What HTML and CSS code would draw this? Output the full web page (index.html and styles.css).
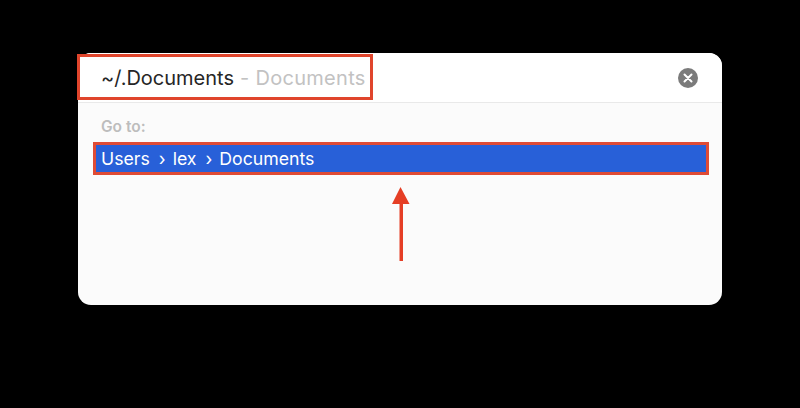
FILE: index.html
```html
<!DOCTYPE html>
<html lang="en">
<head>
  <meta charset="UTF-8">
  <title>Go to Folder</title>
  <link rel="stylesheet" href="styles.css">
</head>
<body>
  <div class="dialog">
    <div class="header">
      <div class="path-box">
        <span class="path">~/.Documents</span>
        <span class="hint">- Documents</span>
      </div>
      <svg class="close" viewBox="0 0 20 20" width="20" height="20">
        <circle cx="10" cy="10" r="10" fill="#7b7b7b"/>
        <path d="M6.5 6.5l7 7M13.5 6.5l-7 7" stroke="#fff" stroke-width="2" stroke-linecap="round"/>
      </svg>
    </div>
    <div class="results">
      <div class="goto">Go to:</div>
      <div class="row">
        <span>Users</span>
        <span class="sep">›</span>
        <span>lex</span>
        <span class="sep">›</span>
        <span>Documents</span>
      </div>
    </div>
    <svg class="arrow" viewBox="0 0 20 74" width="20" height="74">
      <path d="M9.5 0L18.5 17H1z" fill="#e53e25"/>
      <rect x="8.5" y="16" width="3.5" height="58" fill="#e53e25"/>
    </svg>
  </div>
</body>
</html>
```

FILE: styles.css
```css
body {
  margin: 0;
  background-color: #000;
  font-family: Inter, "Liberation Sans", sans-serif;
}

.dialog {
  position: relative;
  width: 644px;
  height: 252px;
  margin: 53px 0 0 78px;
  background-color: #fbfbfb;
  border-radius: 13px;
}

.header {
  display: flex;
  align-items: flex-start;
  justify-content: space-between;
  height: 49px;
  padding-right: 24px;
  background-color: #fff;
  border-bottom: 1px solid #e9e9e9;
  border-radius: 13px 13px 0 0;
}

.path-box {
  display: flex;
  align-items: center;
  gap: 6px;
  box-sizing: border-box;
  width: 296px;
  height: 46px;
  margin: 1px 0 0 -1px;
  padding: 1px 0 0 21px;
  border: 3px solid #e0452c;
  background-color: #fff;
  font-size: 20px;
  white-space: nowrap;
}

.path {
  color: #262626;
}

.hint {
  color: #c2c2c2;
  letter-spacing: 0.3px;
}

.close {
  margin-top: 15px;
}

.results {
  padding: 15px 13px 0 15px;
}

.goto {
  margin-left: 8px;
  color: #bdbdbd;
  font-size: 15.5px;
  font-weight: 600;
  line-height: 18px;
}

.row {
  display: flex;
  align-items: center;
  gap: 7px;
  box-sizing: border-box;
  height: 33px;
  margin-top: 6px;
  padding: 0 0 1px 5px;
  background-color: #2860d8;
  border: 3px solid #df4b35;
  color: #fff;
  font-size: 17.7px;
}

.sep {
  margin-left: 2px;
}

.arrow {
  position: absolute;
  left: 313px;
  top: 134px;
}
```
